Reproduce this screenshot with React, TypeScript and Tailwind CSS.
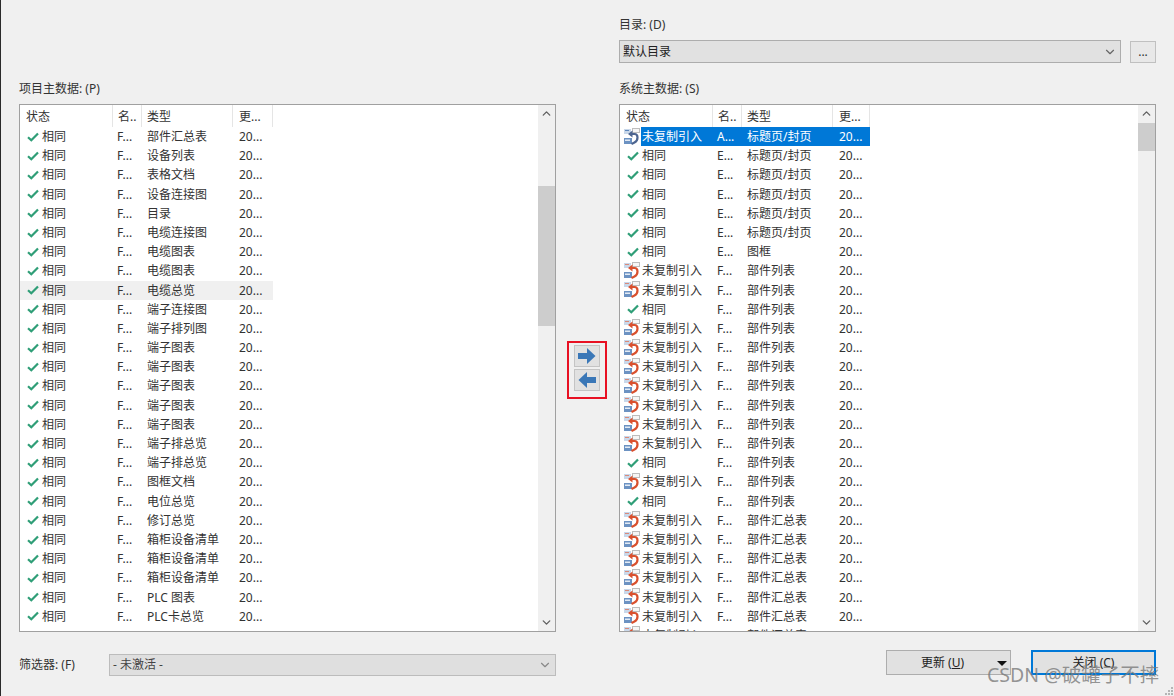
import { ChevronDown, ChevronUp } from 'lucide-react';

type Row = { same: boolean; name: string; type: string };

const leftTypes = [
  '部件汇总表', '设备列表', '表格文档', '设备连接图', '目录', '电缆连接图', '电缆图表', '电缆图表', '电缆总览',
  '端子连接图', '端子排列图', '端子图表', '端子图表', '端子图表', '端子图表', '端子图表', '端子排总览', '端子排总览',
  '图框文档', '电位总览', '修订总览', '箱柜设备清单', '箱柜设备清单', '箱柜设备清单', 'PLC 图表', 'PLC卡总览',
];

const leftRows: Row[] = leftTypes.map((type) => ({ same: true, name: 'F...', type }));

const partFlags = [false, false, true, false, false, false, false, false, false, false, true, false, true];

const rightRows: Row[] = [
  { same: false, name: 'A...', type: '标题页/封页' },
  ...Array.from({ length: 5 }, () => ({ same: true, name: 'E...', type: '标题页/封页' })),
  { same: true, name: 'E...', type: '图框' },
  ...partFlags.map((same) => ({ same, name: 'F...', type: '部件列表' })),
  ...Array.from({ length: 7 }, () => ({ same: false, name: 'F...', type: '部件汇总表' })),
];

const CheckIcon = () => (
  <svg width="12" height="10" viewBox="0 0 12 10" className="ml-[7px] mr-[3px] shrink-0">
    <path d="M1 5.2 L4.3 8.2 L11 1.4" fill="none" stroke="#2f9e77" strokeWidth="2.2" />
  </svg>
);

const NotCopiedIcon = ({ selected }: { selected?: boolean }) => {
  const arrow = selected ? '#4d6590' : '#d9502e';
  return (
    <svg width="18" height="18" viewBox="0 0 18 18" className="ml-[3px] shrink-0">
      <rect x="9.5" y="0.5" width="7" height="4" fill="#f6f6f6" stroke="#bdbdbd" />
      <rect x="1" y="1" width="7" height="5" fill="#c9d8ea" />
      <path d="M2 2.5h4" stroke={selected ? '#5d86bb' : '#d98a7a'} strokeWidth="1" />
      <rect x="1" y="10" width="8" height="6" fill="#6c92c2" />
      <rect x="2" y="11.5" width="5" height="1.5" fill="#e3ebf5" />
      <path d="M7 6 H11.5 C15.5 6 15.5 12.5 11.5 14.5 L8.5 16" fill="none" stroke={arrow} strokeWidth="2.2" />
      <path d="M9.5 2.5 L5 6 L9.5 9.5 Z" fill={arrow} />
    </svg>
  );
};

const ArrowButton = ({ flip }: { flip?: boolean }) => (
  <div className="w-[26px] h-[22px] bg-[#e1e1e1] border border-[#c4c4c4] flex items-center justify-center">
    <svg width="20" height="18" viewBox="0 0 20 18" className={flip ? 'rotate-180' : ''}>
      <path d="M1 6 H10 V1 L18.5 9 L10 17 V12 H1 Z" fill="#3a77b7" />
    </svg>
  </div>
);

const Scrollbar = ({ thumbClass }: { thumbClass: string }) => (
  <div className="w-[17px] shrink-0 bg-[#f0f0f0] flex flex-col h-full">
    <div className="h-[17px] shrink-0 flex items-center justify-center">
      <ChevronUp size={13} strokeWidth={2.5} className="text-[#606060]" />
    </div>
    <div className={`bg-[#cdcdcd] ${thumbClass}`} />
    <div className="mt-auto h-[17px] shrink-0 flex items-center justify-center">
      <ChevronDown size={13} strokeWidth={2.5} className="text-[#606060]" />
    </div>
  </div>
);

const HeaderCell = ({ className, children }: { className: string; children: string }) => (
  <div className={`h-full pt-px border-r border-[#e5e5e5] flex items-center shrink-0 ${className}`}>{children}</div>
);

const DataList = ({
  rows,
  rowWidth,
  lastWidth,
  thumbClass,
  highlight,
}: {
  rows: Row[];
  rowWidth: string;
  lastWidth: string;
  thumbClass: string;
  highlight?: number;
}) => (
  <div className="h-[528px] bg-white border border-[#a0a0a0] flex overflow-hidden">
    <div className="flex-1 min-w-0 overflow-hidden">
      <div className="h-[22px] flex text-[#333]">
        <HeaderCell className="w-[93px] pl-[6px]">状态</HeaderCell>
        <HeaderCell className="w-[29px] pl-[5px]">名..</HeaderCell>
        <HeaderCell className="w-[91px] pl-[5px]">类型</HeaderCell>
        <HeaderCell className={`${lastWidth} pl-[6px]`}>更...</HeaderCell>
      </div>
      {rows.map((row, i) => {
        const selected = !row.same && i === 0;
        return (
          <div
            key={i}
            className={`h-[19.2px] flex items-center ${rowWidth} ${i === highlight ? 'bg-[#f0f0f0]' : ''}`}
          >
            {row.same ? <CheckIcon /> : <NotCopiedIcon selected={selected} />}
            <div className={`h-full flex-1 flex ${selected ? 'bg-[#0078d7] text-white' : 'text-[#333]'}`}>
              <span className={`${row.same ? 'w-[71px]' : 'w-[72px] pl-px'} leading-[19.2px] whitespace-nowrap`}>
                {row.same ? '相同' : '未复制引入'}
              </span>
              <span className="w-[29px] pl-[4px] leading-[19.2px]">{row.name}</span>
              <span className="w-[91px] pl-[5px] leading-[19.2px] whitespace-nowrap">{row.type}</span>
              <span className="pl-[6px] leading-[19.2px]">20...</span>
            </div>
          </div>
        );
      })}
    </div>
    <Scrollbar thumbClass={thumbClass} />
  </div>
);

const App = () => {
  return (
    <div
      className="relative w-[1174px] h-[696px] overflow-hidden bg-[#f0f0f0] border-l border-[#2a2a2a] text-[12px] text-[#333]"
      style={{ fontFamily: '"Noto Sans", "Noto Sans CJK SC", sans-serif' }}
    >
      {/* directory picker */}
      <div className="pl-[618px] pt-[16px] h-[80px]">
        <div className="h-[17px] leading-[17px]">目录: (D)</div>
        <div className="mt-[7px] flex items-start">
          <div className="w-[502px] h-[23px] bg-[#e1e1e1] border border-[#adadad] flex items-center justify-between pl-[3px] pr-[3px] text-[#222]">
            <span>默认目录</span>
            <ChevronDown size={14} className="text-[#666]" />
          </div>
          <div className="ml-[9px] w-[26px] h-[22px] mt-px bg-[#e8e8e8] border border-[#c0c0c0] flex items-center justify-center text-[#333] leading-none">
            ...
          </div>
        </div>
      </div>

      {/* the two lists */}
      <div className="flex pl-[18px] items-start">
        <div className="w-[537px] shrink-0">
          <div className="h-[17px] leading-[17px] mb-[7px]">项目主数据: (P)</div>
          <DataList
            rows={leftRows}
            rowWidth="w-[253px]"
            lastWidth="w-[40px]"
            thumbClass="h-[140px] mt-[64px]"
            highlight={8}
          />
        </div>
        <div className="w-[63px] shrink-0 pl-[11px] pt-[261px]">
          <div className="w-[40px] h-[58px] border-2 border-[#e81123] flex flex-col items-center gap-[2px] pt-[2px]">
            <ArrowButton />
            <ArrowButton flip />
          </div>
        </div>
        <div className="w-[537px] shrink-0">
          <div className="h-[17px] leading-[17px] mb-[7px]">系统主数据: (S)</div>
          <DataList rows={rightRows} rowWidth="w-[250px]" lastWidth="w-[37px]" thumbClass="h-[28px] mt-px" />
        </div>
      </div>

      {/* footer */}
      <div className="flex pl-[18px] mt-[18px] items-start">
        <div className="w-[537px] shrink-0 flex items-center mt-[4px]">
          <span className="w-[90px]">筛选器: (F)</span>
          <div className="flex-1 h-[22px] bg-[#dfdfdf] border border-[#bcbcbc] flex items-center justify-between pl-[3px] pr-[3px] text-[#444]">
            <span>- 未激活 -</span>
            <ChevronDown size={14} className="text-[#888]" />
          </div>
        </div>
        <div className="w-[63px] shrink-0" />
        <div className="w-[537px] shrink-0 flex justify-end gap-[20px]">
          <div className="relative w-[125px] h-[25px] bg-[#e1e1e1] border border-[#adadad] flex items-center justify-center pr-[12px] text-[#222]">
            <span>
              更新 (<span className="underline">U</span>)
            </span>
            <div className="absolute right-[3px] top-[10px] w-0 h-0 border-x-[5px] border-x-transparent border-t-[5px] border-t-[#111]" />
          </div>
          <div className="w-[125px] h-[25px] bg-[#e1e1e1] border-2 border-[#0078d7] flex items-center justify-center text-[#222]">
            关闭 (C)
          </div>
        </div>
      </div>

      {/* resize grip */}
      <div className="absolute right-0 bottom-0 grid grid-cols-3 gap-px p-px">
        {[0, 1, 2, 3, 4, 5, 6, 7, 8].map((i) => (
          <div key={i} className={`w-[2px] h-[2px] ${i === 0 || i === 1 || i === 3 ? 'bg-transparent' : 'bg-[#b5b5b5]'}`} />
        ))}
      </div>

      {/* watermark */}
      <div className="absolute left-[986px] top-[662px] text-[19.5px] leading-[26px] text-[#7a7a7a]/80 whitespace-nowrap">
        CSDN @破罐子不摔
      </div>
    </div>
  );
};

export default App;
